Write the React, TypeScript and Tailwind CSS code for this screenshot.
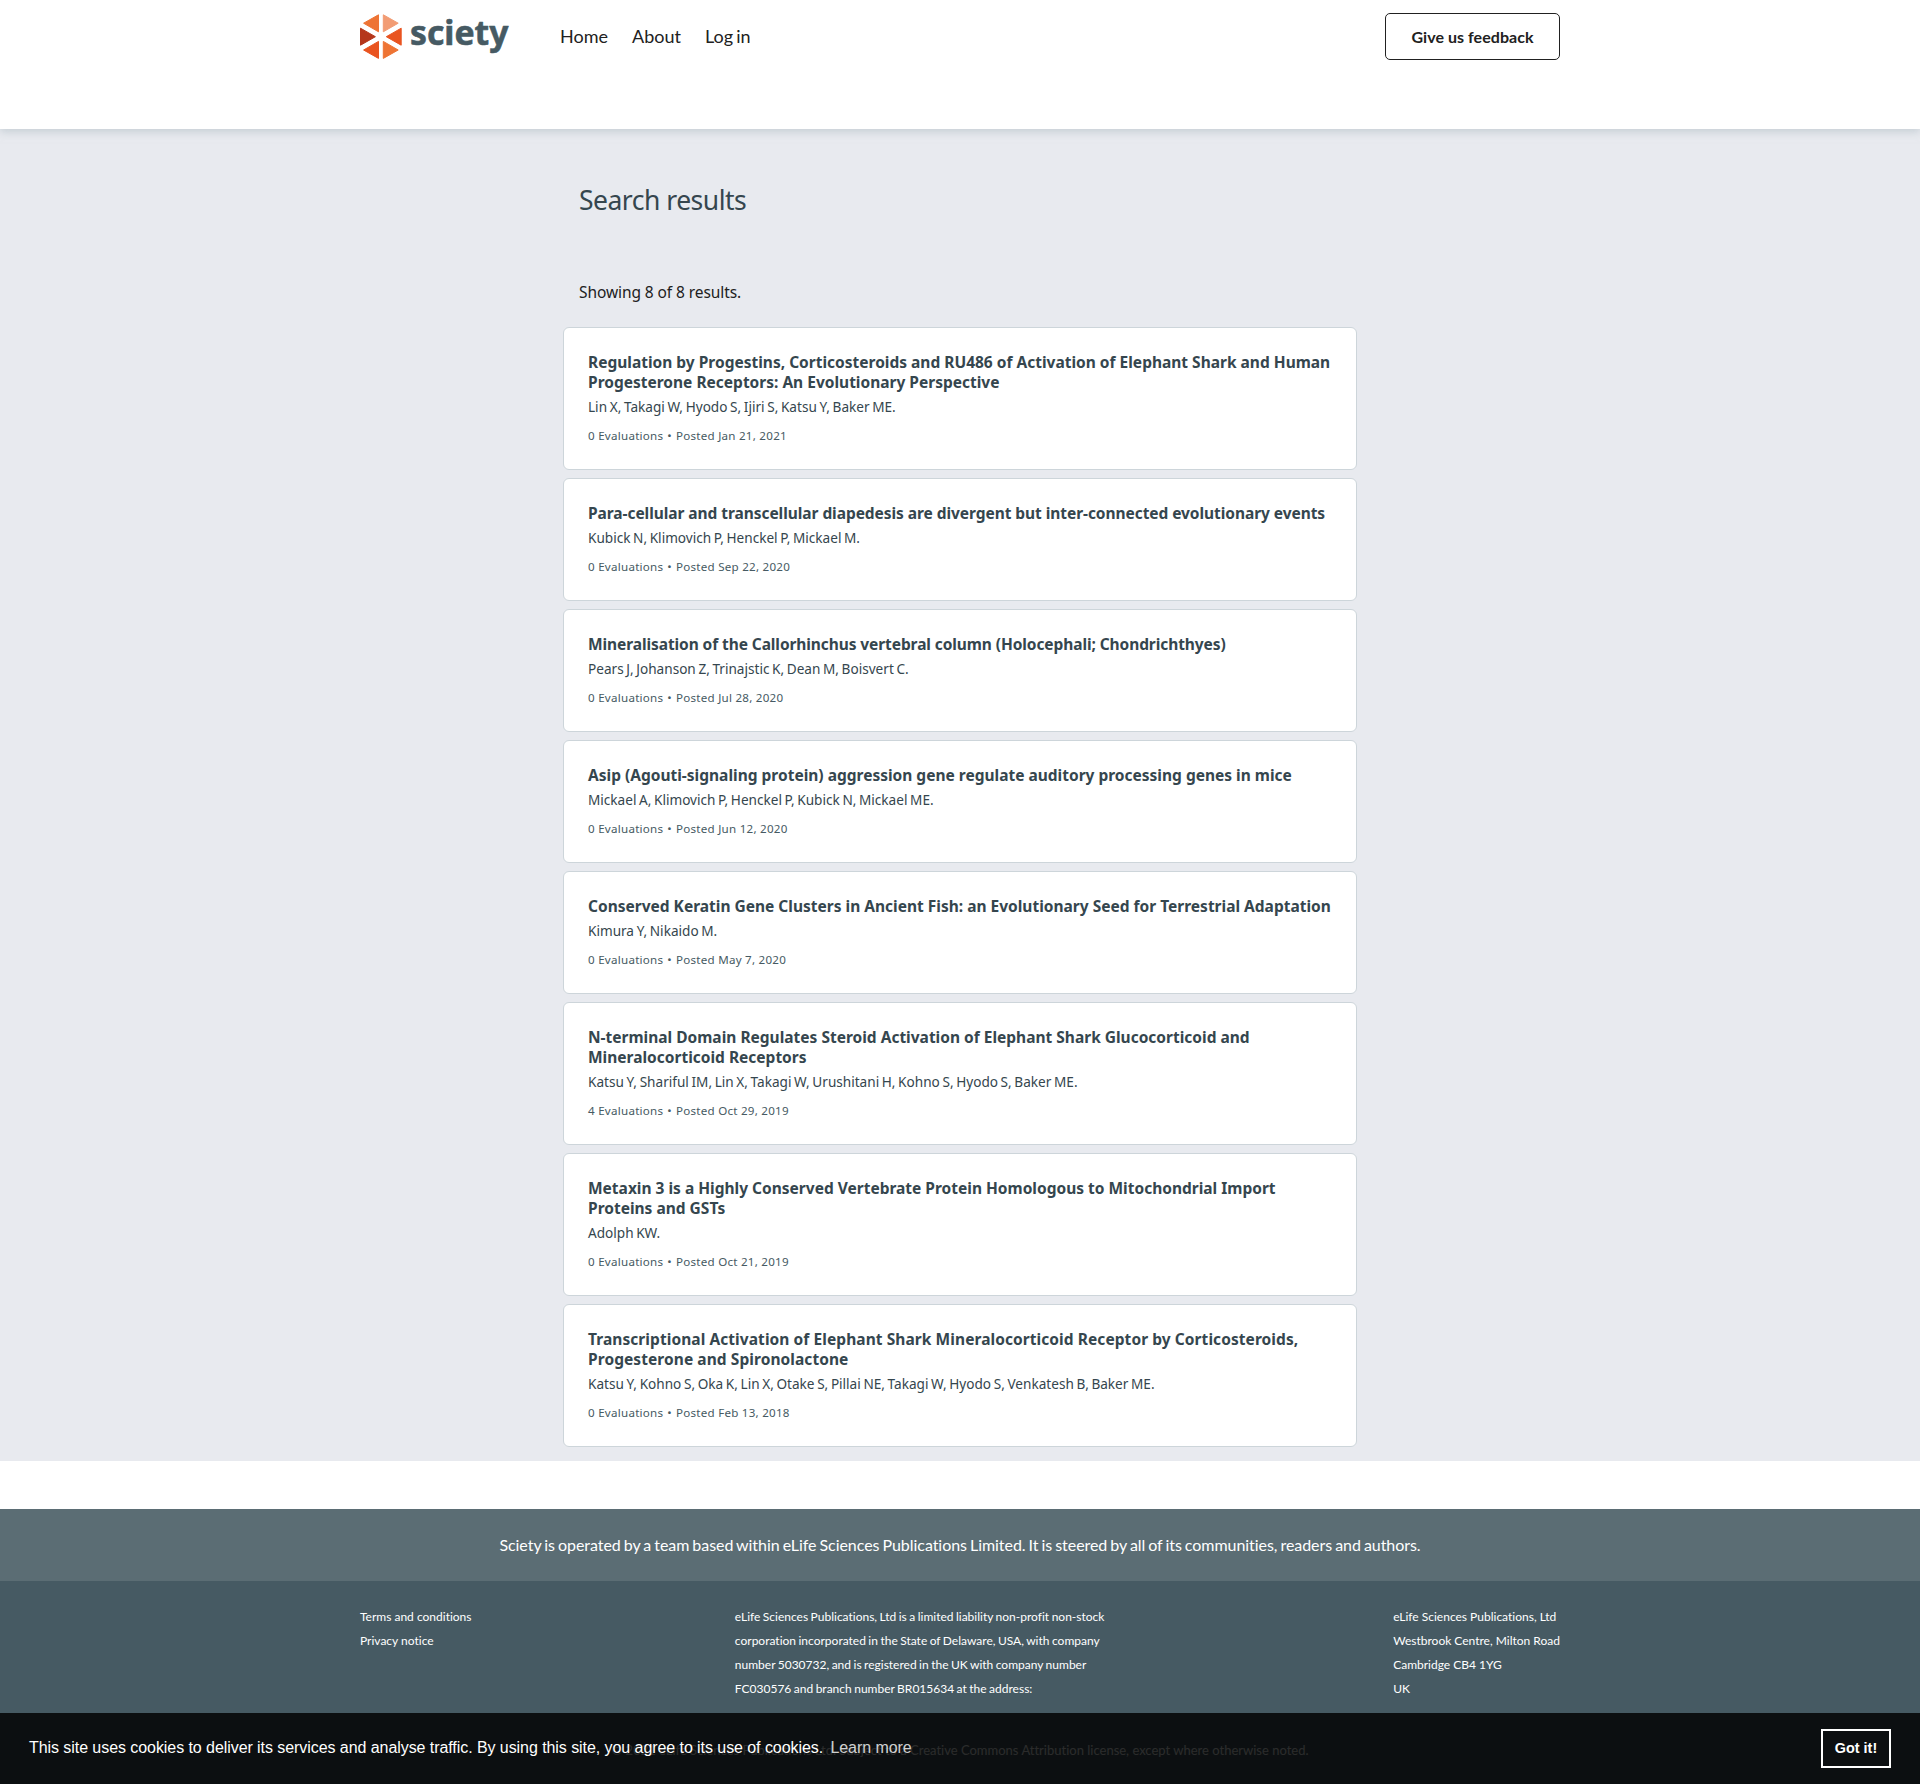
type Result = { title: string[]; authors: string; evaluations: number; posted: string; tracking?: string };

const results: Result[] = [
  {
    title: [
      'Regulation by Progestins, Corticosteroids and RU486 of Activation of Elephant Shark and Human',
      'Progesterone Receptors: An Evolutionary Perspective',
    ],
    authors: 'Lin X, Takagi W, Hyodo S, Ijiri S, Katsu Y, Baker ME.',
    evaluations: 0,
    posted: 'Jan 21, 2021',
  },
  {
    title: ['Para-cellular and transcellular diapedesis are divergent but inter-connected evolutionary events'],
    authors: 'Kubick N, Klimovich P, Henckel P, Mickael M.',
    evaluations: 0,
    posted: 'Sep 22, 2020',
    tracking: 'tracking-[-0.06px]',
  },
  {
    title: ['Mineralisation of the Callorhinchus vertebral column (Holocephali; Chondrichthyes)'],
    authors: 'Pears J, Johanson Z, Trinajstic K, Dean M, Boisvert C.',
    evaluations: 0,
    posted: 'Jul 28, 2020',
    tracking: 'tracking-[-0.09px]',
  },
  {
    title: ['Asip (Agouti-signaling protein) aggression gene regulate auditory processing genes in mice'],
    authors: 'Mickael A, Klimovich P, Henckel P, Kubick N, Mickael ME.',
    evaluations: 0,
    posted: 'Jun 12, 2020',
  },
  {
    title: ['Conserved Keratin Gene Clusters in Ancient Fish: an Evolutionary Seed for Terrestrial Adaptation'],
    authors: 'Kimura Y, Nikaido M.',
    evaluations: 0,
    posted: 'May 7, 2020',
  },
  {
    title: [
      'N-terminal Domain Regulates Steroid Activation of Elephant Shark Glucocorticoid and',
      'Mineralocorticoid Receptors',
    ],
    authors: 'Katsu Y, Shariful IM, Lin X, Takagi W, Urushitani H, Kohno S, Hyodo S, Baker ME.',
    evaluations: 4,
    posted: 'Oct 29, 2019',
  },
  {
    title: [
      'Metaxin 3 is a Highly Conserved Vertebrate Protein Homologous to Mitochondrial Import',
      'Proteins and GSTs',
    ],
    authors: 'Adolph KW.',
    evaluations: 0,
    posted: 'Oct 21, 2019',
  },
  {
    title: [
      'Transcriptional Activation of Elephant Shark Mineralocorticoid Receptor by Corticosteroids,',
      'Progesterone and Spironolactone',
    ],
    authors: 'Katsu Y, Kohno S, Oka K, Lin X, Otake S, Pillai NE, Takagi W, Hyodo S, Venkatesh B, Baker ME.',
    evaluations: 0,
    posted: 'Feb 13, 2018',
    tracking: 'tracking-[0.07px]',
  },
];

function Logo() {
  return (
    <a className="flex h-[46px] w-[150px] shrink-0" aria-label="Sciety">
      <svg viewBox="0 0 150 46" width="150" height="46" strokeLinejoin="round" strokeWidth="1" className="overflow-visible">
        <path d="M18.5 .8V17.8L3.6 9.2Z" fill="#ee7434" stroke="#ee7434" />
        <path d="M23.3 .8V17.8L38.2 9.2Z" fill="#f29c74" stroke="#f29c74" />
        <path d="M.5 14.2V31.2L15.4 22.7Z" fill="#b5361b" stroke="#b5361b" />
        <path d="M41.2 14.2V31.2L26.3 22.7Z" fill="#e95420" stroke="#e95420" />
        <path d="M18.5 44.4V27.4L3.6 36Z" fill="#e95420" stroke="#e95420" />
        <path d="M23.3 44.4V27.4L38.2 36Z" fill="#ee7434" stroke="#ee7434" />
        <text
          x="50"
          y="31.3"
          textLength="98.5"
          lengthAdjust="spacingAndGlyphs"
          fill="#465a63"
          stroke="#465a63"
          strokeWidth="0.6"
          className="font-['Noto_Sans',sans-serif] text-[34px] font-bold"
        >
          sciety
        </text>
      </svg>
    </a>
  );
}

function Card({ title, authors, evaluations, posted, tracking }: Result) {
  return (
    <li className="rounded-[6px] border border-[#cdd5da] bg-white px-6 pt-6 pb-6 whitespace-nowrap">
      <h3 className={`text-[15.5px] leading-5 font-bold text-[#35464e] ${tracking ?? 'tracking-[0px]'}`}>
        {title.map((line) => (
          <span key={line} className="block">{line}</span>
        ))}
      </h3>
      <div className="mt-1 text-[13.6px] leading-[22px] text-[#35464e] [word-spacing:-0.9px]">{authors}</div>
      <div className="mt-[9px] text-[11.6px] leading-[18px] tracking-[0.25px] text-[#465a63]">
        {evaluations} Evaluations<span className="mx-1">•</span>Posted {posted}
      </div>
    </li>
  );
}

export default function App() {
  return (
    <div className="relative h-[1784px] overflow-hidden bg-white font-['Lato',sans-serif] text-[#212121] [font-variant-ligatures:none]">
      <header className="relative z-10 h-[129px] bg-white shadow-[0_3px_8px_rgba(176,190,197,0.6)]">
        <div className="mx-auto flex w-[1200px] items-start">
          <div className="pt-3.5"><Logo /></div>
          <nav className="ml-[50px] flex gap-6 pt-6 text-[18px] leading-6">
            <a>Home</a>
            <a>About</a>
            <a className="[word-spacing:-1.5px]">Log in</a>
          </nav>
          <a className="mt-[13px] ml-auto flex h-[47px] w-[175px] items-center justify-center rounded-[5px] border border-[#212121] text-base font-bold tracking-[0.05px]">
            Give us feedback
          </a>
        </div>
      </header>

      <main className="h-[1332px] bg-[#e8eaef] font-['Noto_Sans',sans-serif]">
        <div className="mx-auto w-[794px] pt-[53px]">
          <h1 className="px-4 text-[26.5px] leading-9 tracking-[-0.5px] text-[#35464e]">Search results</h1>
          <p className="mt-[62px] px-4 text-[15.5px] leading-6 tracking-[-0.08px]">Showing 8 of 8 results.</p>
          <ul className="mt-[23px] flex flex-col gap-2">
            {results.map((r) => (
              <Card key={r.title[0]} {...r} />
            ))}
          </ul>
        </div>
      </main>

      <footer className="mt-12 text-white">
        <div className="flex h-[72px] items-center justify-center bg-[#5b6d74] text-base tracking-[-0.05px] [word-spacing:-1px]">
          Sciety is operated by a team based within eLife Sciences Publications Limited. It is steered by all of its
          communities, readers and authors.
        </div>
        <div className="h-[203px] bg-[#465a63] pt-6">
          <div className="mx-auto flex w-[1200px] justify-between text-xs leading-6 whitespace-nowrap">
            <ul>
              <li>Terms and conditions</li>
              <li>Privacy notice</li>
            </ul>
            <p className="w-[395px] [word-spacing:-0.6px]">
              eLife Sciences Publications, Ltd is a limited liability non-profit non-stock
              <br />
              corporation incorporated in the State of Delaware, USA, with company
              <br />
              number 5030732, and is registered in the UK with company number
              <br />
              FC030576 and branch number BR015634 at the address:
            </p>
            <address className="not-italic">
              eLife Sciences Publications, Ltd
              <br />
              Westbrook Centre, Milton Road
              <br />
              Cambridge CB4 1YG
              <br />
              UK
            </address>
          </div>
          <p className="mt-[37px] text-center text-[13px] leading-6">
            © 2021 eLife Sciences Publications Ltd. Subject to a Creative Commons Attribution license, except where
            otherwise noted.
          </p>
        </div>
      </footer>

      <div className="absolute inset-x-0 bottom-0 flex h-[71px] items-center justify-between bg-[#000000d4] px-[29px] font-['Liberation_Sans',Arial,sans-serif] text-white">
        <span className="pb-0.5 text-base leading-6 tracking-[-0.065px]">
          This site uses cookies to deliver its services and analyse traffic. By using this site, you agree to its use
          of cookies. <a className="ml-[3px] opacity-80">Learn more</a>
        </span>
        <button className="h-[39px] w-[70px] border-2 border-white text-[14.4px] font-bold">Got it!</button>
      </div>
    </div>
  );
}
